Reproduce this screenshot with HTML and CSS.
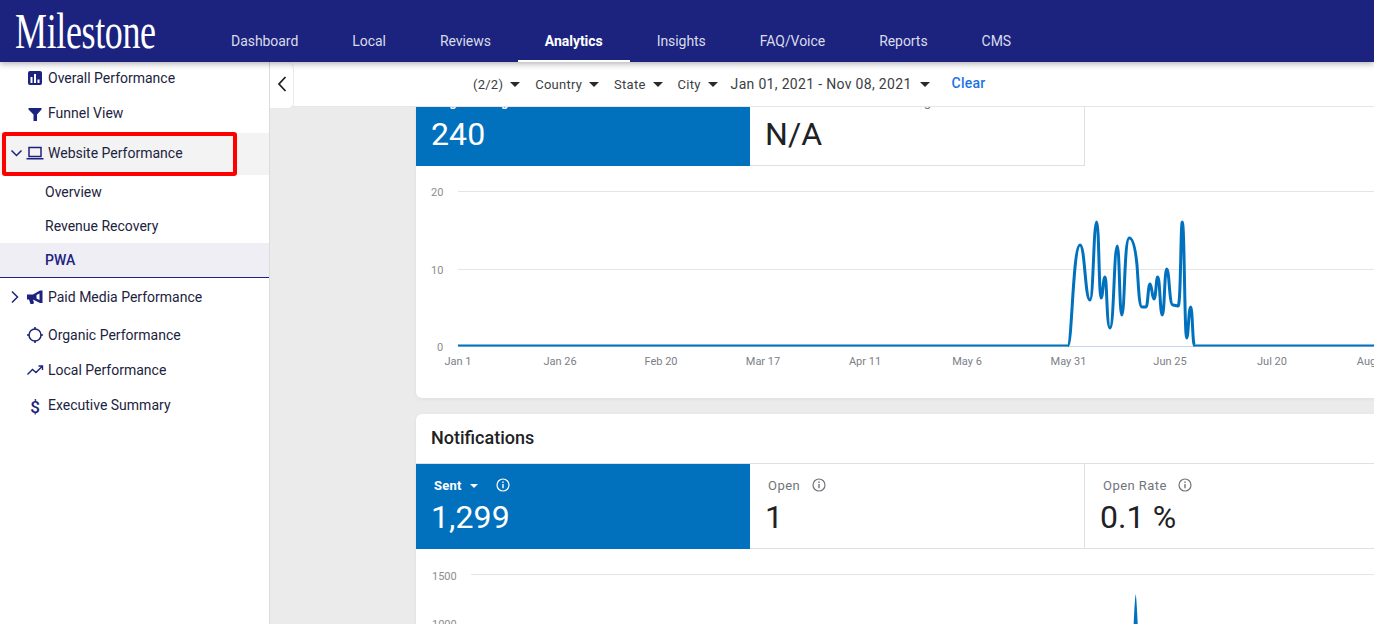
FILE: index.html
```html
<!DOCTYPE html>
<html lang="en">
<head>
<meta charset="utf-8">
<title>Milestone Analytics</title>
<link rel="stylesheet" href="styles.css">
</head>
<body>
<div class="app">
  <header class="topbar">
    <div class="logo"><span class="logo-text">Milestone</span></div>
    <nav class="nav">
      <a class="nav-item">Dashboard</a>
      <a class="nav-item">Local</a>
      <a class="nav-item">Reviews</a>
      <a class="nav-item active">Analytics</a>
      <a class="nav-item">Insights</a>
      <a class="nav-item">FAQ/Voice</a>
      <a class="nav-item">Reports</a>
      <a class="nav-item">CMS</a>
    </nav>
  </header>
  <div class="body">
    <aside class="sidebar">
      <div class="row h32">
        <span class="chev"></span>
        <svg class="icon" viewBox="0 0 18 18"><rect x="2" y="2" width="14" height="14" rx="2" fill="#1b237e"/><path d="M5.500 8v6M9 5v9M12.500 10.500V14" stroke="#fff" stroke-width="2" fill="none"/></svg>
        <span class="label">Overall Performance</span>
      </div>
      <div class="row h37">
        <span class="chev"></span>
        <svg class="icon" viewBox="0 0 18 18"><path d="M2.500 4h13v1.500L11 10.500V17H7.500V10.500L2.500 5.500z" fill="#1b237e"/></svg>
        <span class="label">Funnel View</span>
      </div>
      <div class="row row-open">
        <svg class="chev" viewBox="0 0 18 18"><path d="M3.500 6.500 8.500 11.500 13.500 6.500" fill="none" stroke="#1b237e" stroke-width="1.500"/></svg>
        <svg class="icon" viewBox="0 0 18 18"><path d="M3 3.500h12v9H3z" fill="none" stroke="#1b237e" stroke-width="1.500"/><path d="M.5 14h17v1.500H.5z" fill="#1b237e"/></svg>
        <span class="label">Website Performance</span>
      </div>
      <div class="sub">Overview</div>
      <div class="sub">Revenue Recovery</div>
      <div class="sub sub-active">PWA</div>
      <div class="row h38">
        <svg class="chev" viewBox="0 0 18 18"><path d="M4 3.500 9.500 9 4 14.500" fill="none" stroke="#1b237e" stroke-width="1.500"/></svg>
        <svg class="icon" viewBox="0 0 18 18"><path d="M1 6.500h6L14 2.500h2.500V15H14L7 11.500l1 3.500-1 1H4.500L3 11.500H1z" fill="#1b237e"/><path d="M13.500 5.500v6.500l-3-1.500V7z" fill="#fff"/></svg>
        <span class="label">Paid Media Performance</span>
      </div>
      <div class="row h38">
        <span class="chev"></span>
        <svg class="icon" viewBox="0 0 18 18"><circle cx="9" cy="9" r="6" fill="none" stroke="#1b237e" stroke-width="1.500"/><path d="M9 1v2.500M9 14.500V17M1 9h2.500M14.500 9H17" stroke="#1b237e" stroke-width="1.600"/></svg>
        <span class="label">Organic Performance</span>
      </div>
      <div class="row h32">
        <span class="chev"></span>
        <svg class="icon" viewBox="0 0 18 18"><path d="M1.500 13.500 6.500 8.500 10 11.500 16 5.500M12.500 5h4v4" fill="none" stroke="#1b237e" stroke-width="1.400"/></svg>
        <span class="label">Local Performance</span>
      </div>
      <div class="row h38">
        <span class="chev"></span>
        <span class="icon dollar">$</span>
        <span class="label">Executive Summary</span>
      </div>
    </aside>
    <main class="main">
      <div class="filters">
        <button class="back"><svg class="back-icon" viewBox="0 0 12 18"><path d="M9.500 2 3 9l6.500 7" fill="none" stroke="#222" stroke-width="1.800"/></svg></button>
        <div class="filter-list">
          <span class="filter">(2/2)<i class="caret"></i></span>
          <span class="filter">Country<i class="caret"></i></span>
          <span class="filter">State<i class="caret"></i></span>
          <span class="filter">City<i class="caret"></i></span>
          <span class="filter filter-date">Jan 01, 2021 - Nov 08, 2021<i class="caret"></i></span>
          <span class="clear">Clear</span>
        </div>
      </div>
      <div class="scroller">
        <section class="card card-first">
          <div class="metrics metrics-open">
            <div class="metric metric-on">
              <div class="metric-label">Avg Loading</div>
              <div class="metric-value">240</div>
            </div>
            <div class="metric metric-closed">
              <div class="metric-label">Total Time Before Loading</div>
              <div class="metric-value">N/A</div>
            </div>
          </div>
          <svg class="chart" viewBox="416 166 1000 232" width="1000" height="232">
            <path class="grid" d="M458 191.500H1416M458 269.500H1416"/>
            <path class="axis" d="M458 346.500H1416"/>
            <text class="tick" x="431" y="196">20</text>
            <text class="tick" x="431" y="274">10</text>
            <text class="tick" x="437" y="351">0</text>
            <g class="tick-x">
              <text x="458" y="365">Jan 1</text>
              <text x="560" y="365">Jan 26</text>
              <text x="661" y="365">Feb 20</text>
              <text x="763" y="365">Mar 17</text>
              <text x="865" y="365">Apr 11</text>
              <text x="967" y="365">May 6</text>
              <text x="1068.500" y="365">May 31</text>
              <text x="1170" y="365">Jun 25</text>
              <text x="1272" y="365">Jul 20</text>
              <text x="1374" y="365">Aug 14</text>
            </g>
            <path class="line-flat" d="M458 345.500H1069M1194 345.500H1416"/>
            <path class="line" d="M1068 345.500C1072 345 1073 245 1080 245C1085 245 1085 300 1090 300C1093.500 300 1093.500 222 1096.700 222C1099 222 1099 298 1101 298C1103 298 1103 277 1105 277C1107 277 1106.500 328 1110 328C1114 328 1114 246 1117.300 246C1119.500 246 1119.500 315 1121.700 315C1125 315 1124 238 1129.300 238C1134 238 1136 255 1137 265C1138.500 285 1139 307 1142 307L1146 307C1148 307 1148 284 1150 284C1152 284 1152 299 1154 299C1156 299 1156 277 1157.700 277C1160 277 1160 315 1162.300 315C1164.500 315 1164.500 269 1166.700 269C1169.500 269 1169 305 1173 305L1178 306C1181 307 1180.500 222 1182.300 222C1184.500 222 1184.500 338 1186.700 338C1188.500 338 1188.500 307 1190.700 307C1192.500 307 1192.500 345 1194.500 345.500"/>
          </svg>
        </section>
        <section class="card">
          <h2 class="card-title">Notifications</h2>
          <div class="metrics">
            <div class="metric metric-on">
              <div class="metric-label">Sent<i class="caret caret-small"></i><svg class="info" viewBox="0 0 14 14"><circle cx="7" cy="7" r="6" fill="none" stroke="currentColor" stroke-width="1.200"/><path d="M7 6v4.200M7 3.500v1.400" stroke="currentColor" stroke-width="1.400"/></svg></div>
              <div class="metric-value">1,299</div>
            </div>
            <div class="metric">
              <div class="metric-label metric-label-open">Open<svg class="info" viewBox="0 0 14 14"><circle cx="7" cy="7" r="6" fill="none" stroke="currentColor" stroke-width="1.200"/><path d="M7 6v4.200M7 3.500v1.400" stroke="currentColor" stroke-width="1.400"/></svg></div>
              <div class="metric-value">1</div>
            </div>
            <div class="metric metric-wide">
              <div class="metric-label">Open Rate<svg class="info" viewBox="0 0 14 14"><circle cx="7" cy="7" r="6" fill="none" stroke="currentColor" stroke-width="1.200"/><path d="M7 6v4.200M7 3.500v1.400" stroke="currentColor" stroke-width="1.400"/></svg></div>
              <div class="metric-value">0.1 %</div>
            </div>
          </div>
          <svg class="chart" viewBox="416 549 1000 100" width="1000" height="100">
            <path class="grid" d="M471 574.500H1416"/>
            <text class="tick" x="432" y="580">1500</text>
            <text class="tick" x="432" y="628">1000</text>
            <path class="spike" d="M1132.800 640C1134 620 1134.600 600 1135.700 594C1136.800 600 1137.400 620 1138.600 640Z"/>
          </svg>
        </section>
      </div>
    </main>
  </div>
  <div class="highlight"></div>
</div>
</body>
</html>
```
FILE: styles.css
```css
* { box-sizing: border-box; }
html, body { margin: 0; height: 100%; overflow: hidden; }
body { font-family: Roboto, "Liberation Sans", sans-serif; color: #1c2340; background: #ebebeb; }
.app { position: relative; display: flex; flex-direction: column; width: 1374px; height: 624px; overflow: hidden; }

.topbar { position: relative; z-index: 3; flex: none; display: flex; height: 62px; background: #1b237e; box-shadow: 0 2px 6px rgba(0,0,0,.3); }
.logo { flex: none; width: 204px; padding: 3px 0 0 15px; white-space: nowrap; overflow: hidden; }
.logo-text { display: inline-block; font: 50px/56px "Liberation Serif", serif; color: #fff; letter-spacing: -.5px; transform: scaleX(.72); transform-origin: left center; }
.nav { display: flex; }
.nav-item { display: flex; align-items: flex-end; height: 62px; padding: 0 27px 12px; font-size: 14px; line-height: 17px; letter-spacing: -.05px; color: #d9dbea; }
.nav-item.active { color: #fff; font-weight: 700; border-bottom: 2px solid #fff; padding-bottom: 10px; }

.body { flex: 1; display: flex; min-height: 0; }
.sidebar { flex: none; width: 270px; background: #fff; border-right: 1px solid #dcdcdc; font-size: 14px; }
.row { display: flex; align-items: center; padding-left: 8px; }
.h32 { height: 32px; }
.h37 { height: 37px; }
.h38 { height: 38px; }
.row-open { height: 42px; margin-top: 2px; padding-bottom: 3px; background: #f3f3f3; }
.chev { flex: none; width: 18px; height: 18px; }
.icon { flex: none; width: 18px; height: 18px; margin-right: 4px; }
.dollar { font-size: 17px; line-height: 18px; font-weight: 500; text-align: center; color: #1b237e; margin-top: 3px; }
.label { white-space: nowrap; }
.sub { height: 34px; padding-left: 45px; line-height: 34px; }
.sub-active { height: 35px; background: #efeef5; border-bottom: 1px solid #1b237e; color: #1b237e; font-weight: 500; }

.main { flex: 1; min-width: 0; display: flex; flex-direction: column; }
.filters { position: relative; z-index: 2; flex: none; display: flex; height: 45px; background: #fff; border-bottom: 1px solid #e6e6e6; }
.back { flex: none; width: 24px; height: 47px; margin: 0; padding: 0; background: #fff; border: 1px solid #e9e9e9; border-width: 0 1px 1px 0; border-radius: 0 6px 6px 0; display: flex; align-items: center; justify-content: center; }
.back-icon { width: 12px; height: 18px; margin-top: -2px; }
.filter-list { display: flex; align-items: center; margin-left: 179px; height: 44px; font-size: 13px; letter-spacing: .25px; color: #3c4043; }
.filter { display: flex; align-items: center; margin-right: 15px; white-space: nowrap; }
.filter-date { font-size: 14px; letter-spacing: .32px; margin-left: -2px; margin-right: 22px; margin-top: -1px; }
.caret { display: inline-block; width: 0; height: 0; margin-left: 7px; border: 5px solid transparent; border-top: 5px solid #2a2a2a; border-bottom: 0; }
.filter-date .caret { margin-left: 8px; margin-top: 2px; }
.clear { color: #1a73e8; font-size: 14px; font-weight: 500; margin-top: -2px; }

.scroller { flex: 1; min-height: 0; overflow: hidden; padding-left: 146px; background: #ebebeb; }
.card { width: 1000px; background: #fff; border-radius: 6px 0 0 6px; box-shadow: 0 1px 4px rgba(0,0,0,.06); margin-bottom: 16px; }
.card-first { margin-top: -26px; }
.card-title { margin: 0; height: 50px; padding-left: 15px; font-size: 18px; line-height: 48px; font-weight: 500; color: #202124; border-bottom: 1px solid #e0e0e0; }
.metrics { display: flex; height: 85px; border-bottom: 1px solid #e0e0e0; }
.metrics-open { border-bottom: 0; }
.metric { flex: none; width: 335px; height: 85px; padding: 13px 0 0 18px; border-right: 1px solid #e0e0e0; margin-bottom: -1px; }
.metric-wide { flex: 1; border-right: 0; }
.metric-closed { border-bottom: 1px solid #e0e0e0; }
.metric-label { display: flex; align-items: center; height: 16px; font-size: 13px; letter-spacing: .45px; color: #70757a; white-space: nowrap; }
.card-first .metric { padding-top: 12px; }
.card-first .metric-value { margin-top: 6px; }
.metric-value { margin: 5px 0 0 -3px; font-size: 32px; line-height: 38px; font-weight: 400; letter-spacing: .1px; color: #202124; white-space: nowrap; }
.metric-on { width: 334px; background: #0171be; border-right: 0; }
.metric-on .metric-label { color: #fff; font-weight: 700; letter-spacing: .2px; }
.metric-on .metric-value { color: #fff; }
.caret-small { margin-left: 8px; margin-right: 18px; border-width: 4px; border-top: 4px solid #fff; border-bottom: 0; margin-top: 2px; }
.metric:not(.metric-on) .info { margin-left: 11px; }
.metric-label-open .info { margin-left: 12px; }
.metric .metric-label-open .info { margin-left: 12px; }
.info { flex: none; width: 14px; height: 14px; }

.chart { display: block; font-family: Roboto, "Liberation Sans", sans-serif; }
.grid { stroke: #e5e5e5; stroke-width: 1; fill: none; }
.axis { stroke: #c5d6ea; stroke-width: 1; fill: none; }
.tick { font-size: 11px; fill: #8d8d8d; }
.tick-x text { font-size: 11px; fill: #7b8087; text-anchor: middle; }
.line { fill: none; stroke: #0171be; stroke-width: 3; stroke-linejoin: round; }
.line-flat { fill: none; stroke: #0171be; stroke-width: 2; }
.spike { fill: #0171be; }

.highlight { position: absolute; left: 2px; top: 132px; width: 235px; height: 44px; border: 4px solid #f00; border-radius: 3px; pointer-events: none; z-index: 4; }
```
